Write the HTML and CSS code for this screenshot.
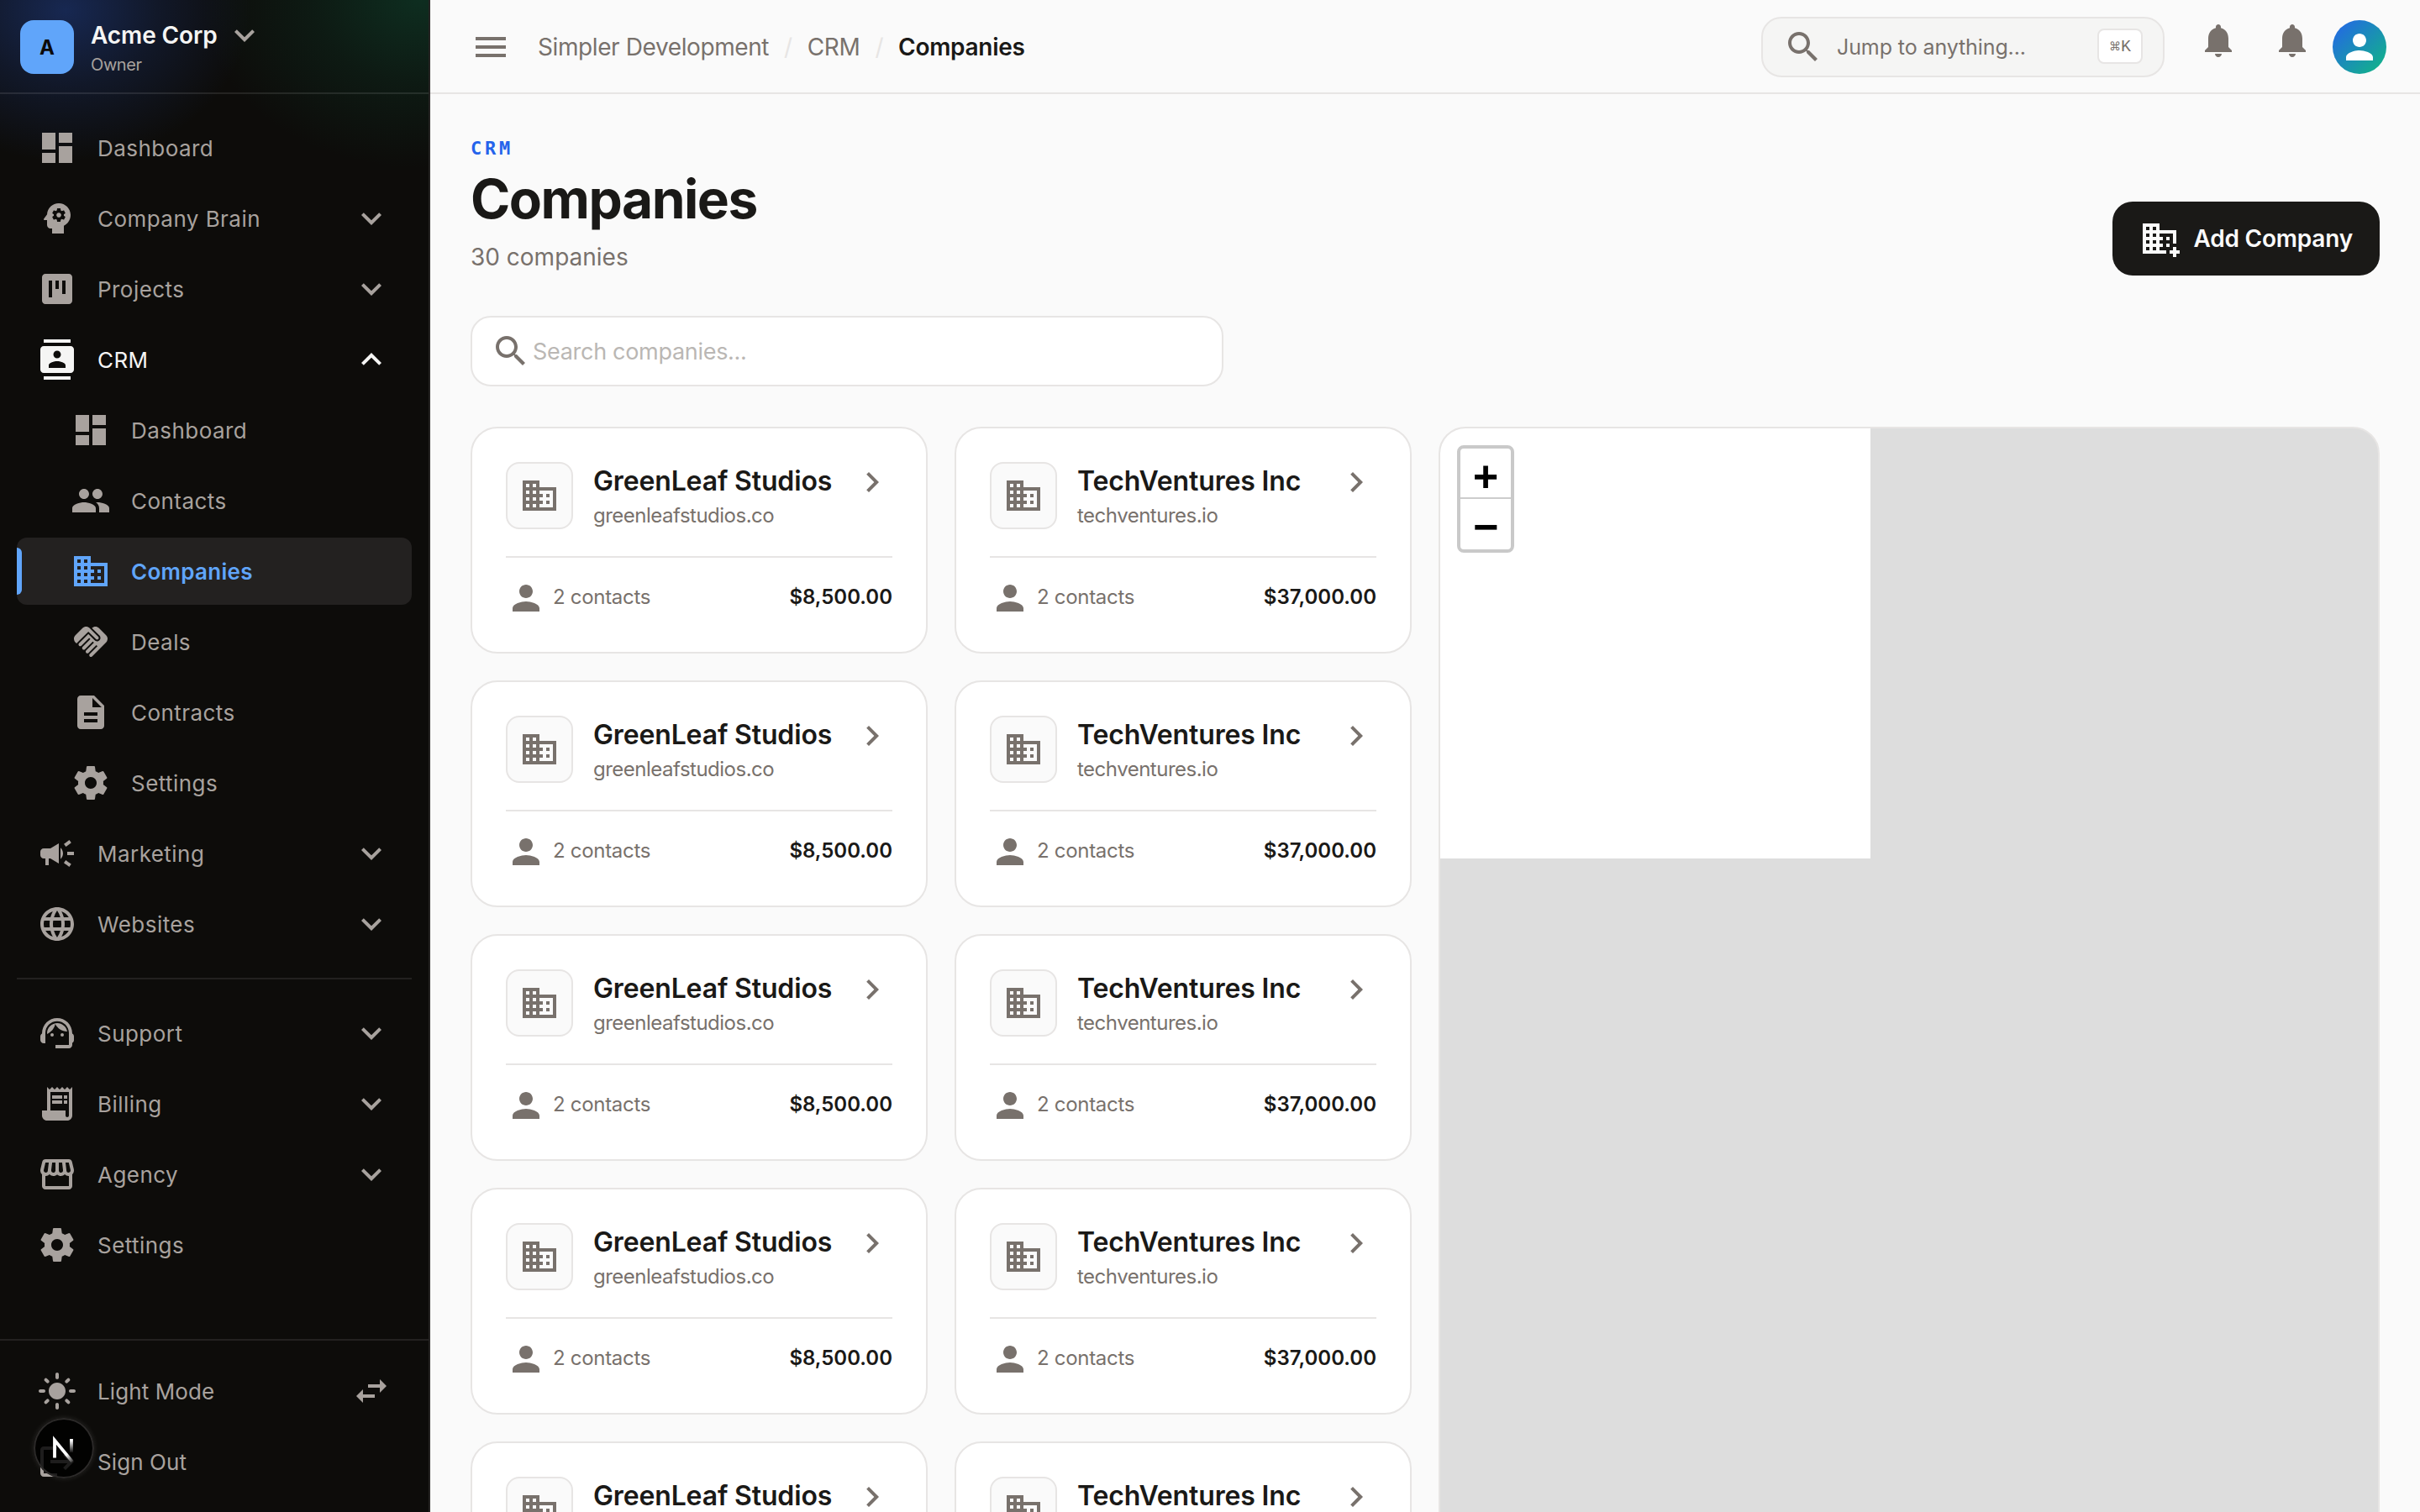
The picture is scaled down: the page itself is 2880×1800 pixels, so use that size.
FILE: index.html
```
<!DOCTYPE html>
<html lang="en">
<head>
    <meta charset="UTF-8">
    <meta name="viewport" content="width=device-width, initial-scale=1.0">
    <title>Companies - CRM</title>
    <link rel="stylesheet" href="styles.css">
</head>
<body>
    <!-- icon sprite -->
    <svg class="sprite" aria-hidden="true">
        <symbol id="i-dashboard" viewBox="0 0 24 24"><path d="M3 13h8V3H3v10zm0 8h8v-6H3v6zm10 0h8V11h-8v10zm0-18v6h8V3h-8z"/></symbol>
        <symbol id="i-brain" viewBox="0 0 24 24"><path d="M13 8.57c-.79 0-1.43.64-1.43 1.43s.64 1.43 1.43 1.43 1.43-.64 1.43-1.43-.64-1.43-1.43-1.43z"/><path d="M13 3C9.25 3 6.2 5.94 6.02 9.64L4.1 12.2c-.25.33-.01.8.4.8H6v3c0 1.1.9 2 2 2h1v3h7v-4.68c2.36-1.12 4-3.53 4-6.32 0-3.87-3.13-7-7-7zm3 7c0 .13-.01.26-.02.39l.83.66c.08.06.1.16.05.25l-.8 1.39c-.05.09-.16.12-.24.09l-.99-.4c-.21.16-.43.29-.67.39L14 13.83c-.01.1-.1.17-.2.17h-1.6c-.1 0-.18-.07-.2-.17l-.15-1.06c-.25-.1-.47-.23-.68-.39l-.99.4c-.09.03-.2 0-.25-.09l-.8-1.39c-.05-.08-.03-.19.05-.25l.84-.66c-.01-.13-.02-.26-.02-.39s.02-.27.04-.39l-.85-.66c-.08-.06-.1-.16-.05-.26l.8-1.38c.05-.09.15-.12.24-.09l1 .4c.2-.15.43-.29.67-.39l.15-1.06c.02-.1.1-.17.2-.17h1.6c.1 0 .18.07.2.17l.15 1.06c.24.1.46.23.67.39l1-.4c.09-.03.2 0 .24.09l.8 1.38c.05.09.03.2-.05.26l-.85.66c.03.12.04.25.04.39z"/></symbol>
        <symbol id="i-kanban" viewBox="0 0 24 24"><path d="M19 3H5c-1.1 0-2 .9-2 2v14c0 1.1.9 2 2 2h14c1.1 0 2-.9 2-2V5c0-1.1-.9-2-2-2zM9 17H7V7h2v10zm4-5h-2V7h2v5zm4 3h-2V7h2v8z"/></symbol>
        <symbol id="i-contacts" viewBox="0 0 24 24"><path d="M20 0H4v2h16V0zM4 24h16v-2H4v2zM20 4H4c-1.1 0-2 .9-2 2v12c0 1.1.9 2 2 2h16c1.1 0 2-.9 2-2V6c0-1.1-.9-2-2-2zm-8 2.75c1.24 0 2.25 1.01 2.25 2.25s-1.01 2.25-2.25 2.25S9.75 10.24 9.75 9 10.76 6.75 12 6.75zM17 17H7v-1.5c0-1.67 3.33-2.5 5-2.5s5 .83 5 2.5V17z"/></symbol>
        <symbol id="i-people" viewBox="0 0 24 24"><path d="M16 11c1.66 0 2.99-1.34 2.99-3S17.66 5 16 5c-1.66 0-3 1.34-3 3s1.34 3 3 3zm-8 0c1.66 0 2.99-1.34 2.99-3S9.66 5 8 5C6.34 5 5 6.34 5 8s1.34 3 3 3zm0 2c-2.33 0-7 1.17-7 3.5V19h14v-2.5c0-2.33-4.67-3.5-7-3.5zm8 0c-.29 0-.62.02-.97.05 1.16.84 1.97 1.97 1.97 3.45V19h6v-2.5c0-2.33-4.67-3.5-7-3.5z"/></symbol>
        <symbol id="i-domain" viewBox="0 0 24 24"><path d="M12 7V3H2v18h20V7H12zM6 19H4v-2h2v2zm0-4H4v-2h2v2zm0-4H4V9h2v2zm0-4H4V5h2v2zm4 12H8v-2h2v2zm0-4H8v-2h2v2zm0-4H8V9h2v2zm0-4H8V5h2v2zm10 12h-8v-2h2v-2h-2v-2h2v-2h-2V9h8v10zm-2-8h-2v2h2v-2zm0 4h-2v2h2v-2z"/></symbol>
        <symbol id="i-domain-add" viewBox="0 0 24 24"><path d="M12 7V3H2v18h14v-2h-4v-2h2v-2h-2v-2h2v-2h-2V9h8v6h2V7H12zM6 19H4v-2h2v2zm0-4H4v-2h2v2zm0-4H4V9h2v2zm0-4H4V5h2v2zm4 12H8v-2h2v2zm0-4H8v-2h2v2zm0-4H8V9h2v2zm0-4H8V5h2v2zm8 4h-2v2h2v-2zm0 4h-2v2h2v-2z"/><path d="M20 17h2v2h2v2h-2v2h-2v-2h-2v-2h2z"/></symbol>
        <symbol id="i-handshake" viewBox="0 0 24 24"><path d="M16.48 10.41c-.39.39-1.04.39-1.43 0l-4.47-4.46-7.05 7.04-.66-.63c-1.17-1.17-1.17-3.07 0-4.24l4.24-4.24c1.17-1.17 3.07-1.17 4.24 0L16.48 9c.39.39.39 1.02 0 1.41zm.7-2.12c.78.78.78 2.05 0 2.83-1.27 1.27-2.61.22-2.83 0l-3.76-3.76-5.57 5.57c-.39.39-.39 1.02 0 1.41.39.39 1.02.39 1.42 0l4.62-4.62.71.71-4.62 4.62c-.39.39-.39 1.02 0 1.41.39.39 1.02.39 1.42 0l4.62-4.62.71.71-4.62 4.62c-.39.39-.39 1.02 0 1.41.39.39 1.02.39 1.41 0l4.62-4.62.71.71-4.62 4.62c-.39.39-.39 1.02 0 1.41.39.39 1.02.39 1.41 0l8.32-8.34c1.17-1.17 1.17-3.07 0-4.24l-4.24-4.24c-1.15-1.15-3.01-1.17-4.18-.06l4.47 4.47z"/></symbol>
        <symbol id="i-description" viewBox="0 0 24 24"><path d="M14 2H6c-1.1 0-1.99.9-1.99 2L4 20c0 1.1.89 2 1.99 2H18c1.1 0 2-.9 2-2V8l-6-6zm2 16H8v-2h8v2zm0-4H8v-2h8v2zm-3-5V3.5L18.5 9H13z"/></symbol>
        <symbol id="i-settings" viewBox="0 0 24 24"><path d="M19.43 12.98c.04-.32.07-.64.07-.98s-.03-.66-.07-.98l2.11-1.65c.19-.15.24-.42.12-.64l-2-3.46c-.12-.22-.39-.3-.61-.22l-2.49 1c-.52-.4-1.08-.73-1.69-.98l-.38-2.65C14.46 2.18 14.25 2 14 2h-4c-.25 0-.46.18-.49.42l-.38 2.65c-.61.25-1.17.59-1.69.98l-2.49-1c-.23-.09-.49 0-.61.22l-2 3.46c-.13.22-.07.49.12.64l2.11 1.65c-.04.32-.07.65-.07.98s.03.66.07.98l-2.11 1.65c-.19.15-.24.42-.12.64l2 3.46c.12.22.39.3.61.22l2.49-1c.52.4 1.08.73 1.69.98l.38 2.65c.03.24.24.42.49.42h4c.25 0 .46-.18.49-.42l.38-2.65c.61-.25 1.17-.59 1.69-.98l2.49 1c.23.09.49 0 .61-.22l2-3.46c.12-.22.07-.49-.12-.64l-2.11-1.65zM12 15.5c-1.93 0-3.5-1.57-3.5-3.5s1.57-3.5 3.5-3.5 3.5 1.57 3.5 3.5-1.57 3.5-3.5 3.5z"/></symbol>
        <symbol id="i-campaign" viewBox="0 0 24 24"><path d="M18 11v2h4v-2h-4zm-2 6.61c.96.71 2.21 1.65 3.2 2.39.4-.53.8-1.07 1.2-1.6-.99-.74-2.24-1.68-3.2-2.4-.4.54-.8 1.08-1.2 1.61zM20.4 5.6c-.4-.53-.8-1.07-1.2-1.6-.99.74-2.24 1.68-3.2 2.4.4.53.8 1.07 1.2 1.6.96-.72 2.21-1.65 3.2-2.4zM4 9c-1.1 0-2 .9-2 2v2c0 1.1.9 2 2 2h1v4h2v-4h1l5 3V6L8 9H4zm11.5 3c0-1.33-.58-2.53-1.5-3.35v6.69c.92-.81 1.5-2.01 1.5-3.34z"/></symbol>
        <symbol id="i-language" viewBox="0 0 24 24"><path d="M11.99 2C6.47 2 2 6.48 2 12s4.47 10 9.99 10C17.52 22 22 17.52 22 12S17.52 2 11.99 2zm6.93 6h-2.95c-.32-1.25-.78-2.45-1.38-3.56 1.84.63 3.37 1.91 4.33 3.56zM12 4.04c.83 1.2 1.48 2.53 1.91 3.96h-3.82c.43-1.43 1.08-2.76 1.91-3.96zM4.26 14C4.1 13.36 4 12.69 4 12s.1-1.36.26-2h3.38c-.08.66-.14 1.32-.14 2 0 .68.06 1.34.14 2H4.26zm.82 2h2.95c.32 1.25.78 2.45 1.38 3.56-1.84-.63-3.37-1.9-4.33-3.56zm2.95-8H5.08c.96-1.66 2.49-2.93 4.33-3.56C8.81 5.55 8.35 6.75 8.03 8zM12 19.96c-.83-1.2-1.48-2.53-1.91-3.96h3.82c-.43 1.43-1.08 2.76-1.91 3.96zM14.34 14H9.66c-.09-.66-.16-1.32-.16-2 0-.68.07-1.35.16-2h4.68c.09.65.16 1.32.16 2 0 .68-.07 1.34-.16 2zm.25 5.56c.6-1.11 1.06-2.31 1.38-3.56h2.95c-.96 1.65-2.49 2.93-4.33 3.56zM16.36 14c.08-.66.14-1.32.14-2 0-.68-.06-1.34-.14-2h3.38c.16.64.26 1.31.26 2s-.1 1.36-.26 2h-3.38z"/></symbol>
        <symbol id="i-support" viewBox="0 0 24 24"><path d="M21 12.22C21 6.73 16.74 3 12 3c-4.69 0-9 3.65-9 9.28-.6.34-1 .98-1 1.72v2c0 1.1.9 2 2 2h1v-6.1c0-3.87 3.13-7 7-7s7 3.13 7 7V19h-8v2h8c1.1 0 2-.9 2-2v-1.22c.59-.31 1-.92 1-1.64v-2.3c0-.7-.41-1.31-1-1.62z"/><circle cx="9" cy="13" r="1"/><circle cx="15" cy="13" r="1"/><path d="M18 11.03C17.52 8.18 15.04 6 12.05 6c-3.03 0-6.29 2.51-6.03 6.45 2.47-1.01 4.33-3.21 4.86-5.89 1.31 2.63 4 4.44 7.12 4.47z"/></symbol>
        <symbol id="i-receipt" viewBox="0 0 24 24"><path d="M19.5 3.5L18 2l-1.5 1.5L15 2l-1.5 1.5L12 2l-1.5 1.5L9 2 7.5 3.5 6 2v14H3v3c0 1.66 1.34 3 3 3h12c1.66 0 3-1.34 3-3V2l-1.5 1.5zM19 19c0 .55-.45 1-1 1s-1-.45-1-1v-3H8V5h11v14z"/><path d="M9 7h6v2H9zM16 7h2v2h-2zM9 10h6v2H9zM16 10h2v2h-2z"/></symbol>
        <symbol id="i-storefront" viewBox="0 0 24 24"><path d="M21.9 8.89l-1.05-4.37c-.22-.9-1-1.52-1.91-1.52H5.05c-.9 0-1.69.63-1.9 1.52L2.1 8.89c-.24 1.02-.02 2.06.62 2.88.08.11.19.19.28.29V19c0 1.1.9 2 2 2h14c1.1 0 2-.9 2-2v-6.94c.09-.09.2-.18.28-.28.64-.82.87-1.87.62-2.89zm-2.99-3.9l1.05 4.37c.1.42.01.84-.25 1.17-.14.18-.44.47-.94.47-.61 0-1.14-.49-1.21-1.14L16.98 5l1.93-.01zM13 5h1.96l.54 4.52c.05.39-.07.78-.33 1.07-.22.26-.54.41-.95.41-.67 0-1.22-.59-1.22-1.31V5zM8.49 9.52L9.04 5H11v4.69c0 .72-.55 1.31-1.29 1.31-.34 0-.65-.15-.89-.41-.25-.29-.37-.68-.33-1.07zm-4.45-.16L5.05 5h1.97l-.58 4.86c-.08.65-.6 1.14-1.21 1.14-.49 0-.8-.29-.93-.47-.27-.32-.36-.75-.26-1.17zM5 19v-6.03c.08.01.15.03.23.03.87 0 1.66-.36 2.24-.95.6.6 1.4.95 2.31.95.87 0 1.65-.36 2.23-.93.59.57 1.39.93 2.29.93.84 0 1.64-.35 2.24-.95.58.59 1.37.95 2.24.95.08 0 .15-.02.23-.03V19H5z"/></symbol>
        <symbol id="i-light" viewBox="0 0 24 24"><path d="M12 7c-2.76 0-5 2.24-5 5s2.24 5 5 5 5-2.24 5-5-2.24-5-5-5zM2 13h2c.55 0 1-.45 1-1s-.45-1-1-1H2c-.55 0-1 .45-1 1s.45 1 1 1zm18 0h2c.55 0 1-.45 1-1s-.45-1-1-1h-2c-.55 0-1 .45-1 1s.45 1 1 1zM11 2v2c0 .55.45 1 1 1s1-.45 1-1V2c0-.55-.45-1-1-1s-1 .45-1 1zm0 18v2c0 .55.45 1 1 1s1-.45 1-1v-2c0-.55-.45-1-1-1s-1 .45-1 1zM5.99 4.58c-.39-.39-1.03-.39-1.41 0-.39.39-.39 1.03 0 1.41l1.06 1.06c.39.39 1.03.39 1.41 0s.39-1.03 0-1.41L5.99 4.58zm12.37 12.37c-.39-.39-1.03-.39-1.41 0-.39.39-.39 1.03 0 1.41l1.06 1.06c.39.39 1.03.39 1.41 0 .39-.39.39-1.03 0-1.41l-1.06-1.06zm1.06-10.96c.39-.39.39-1.03 0-1.41-.39-.39-1.03-.39-1.41 0l-1.06 1.06c-.39.39-.39 1.03 0 1.41s1.03.39 1.41 0l1.06-1.06zM7.05 18.36c.39-.39.39-1.03 0-1.41-.39-.39-1.03-.39-1.41 0l-1.06 1.06c-.39.39-.39 1.03 0 1.41s1.03.39 1.41 0l1.06-1.06z"/></symbol>
        <symbol id="i-swap" viewBox="0 0 24 24"><path d="M6.99 11L3 15l3.99 4v-3H14v-2H6.99v-3zM21 9l-3.99-4v3H10v2h7.01v3L21 9z"/></symbol>
        <symbol id="i-logout" viewBox="0 0 24 24"><path d="M17 7l-1.41 1.41L18.17 11H8v2h10.17l-2.58 2.58L17 17l5-5zM4 5h8V3H4c-1.1 0-2 .9-2 2v14c0 1.1.9 2 2 2h8v-2H4V5z"/></symbol>
        <symbol id="i-more" viewBox="0 0 24 24"><path d="M16.59 8.59L12 13.17 7.41 8.59 6 10l6 6 6-6z"/></symbol>
        <symbol id="i-less" viewBox="0 0 24 24"><path d="M12 8l-6 6 1.41 1.41L12 10.83l4.59 4.58L18 14z"/></symbol>
        <symbol id="i-right" viewBox="0 0 24 24"><path d="M10 6L8.59 7.41 13.17 12l-4.58 4.59L10 18l6-6z"/></symbol>
        <symbol id="i-menu" viewBox="0 0 24 24"><path d="M3 18h18v-2H3v2zm0-5h18v-2H3v2zm0-7v2h18V6H3z"/></symbol>
        <symbol id="i-search" viewBox="0 0 24 24"><path d="M15.5 14h-.79l-.28-.27C15.41 12.59 16 11.11 16 9.5 16 5.91 13.09 3 9.5 3S3 5.91 3 9.5 5.91 16 9.5 16c1.61 0 3.09-.59 4.23-1.57l.27.28v.79l5 4.99L20.49 19l-4.99-5zm-6 0C7.01 14 5 11.99 5 9.5S7.01 5 9.5 5 14 7.01 14 9.5 11.99 14 9.5 14z"/></symbol>
        <symbol id="i-bell" viewBox="0 0 24 24"><path d="M12 22c1.1 0 2-.9 2-2h-4c0 1.1.89 2 2 2zm6-6v-5c0-3.07-1.64-5.64-4.5-6.32V4c0-.83-.67-1.5-1.5-1.5s-1.5.67-1.5 1.5v.68C7.63 5.36 6 7.92 6 11v5l-2 2v1h16v-1l-2-2z"/></symbol>
        <symbol id="i-person" viewBox="0 0 24 24"><path d="M12 12c2.21 0 4-1.79 4-4s-1.79-4-4-4-4 1.79-4 4 1.79 4 4 4zm0 2c-2.67 0-8 1.34-8 4v2h16v-2c0-2.66-5.33-4-8-4z"/></symbol>
    </svg>

    <aside class="sidebar">
        <div class="workspace">
            <div class="workspace-logo">A</div>
            <div class="workspace-info">
                <div class="workspace-name">Acme Corp <svg class="icon"><use href="#i-more"/></svg></div>
                <div class="workspace-role">Owner</div>
            </div>
        </div>
        <nav class="nav">
            <a class="nav-item"><svg class="icon"><use href="#i-dashboard"/></svg><span>Dashboard</span></a>
            <a class="nav-item"><svg class="icon"><use href="#i-brain"/></svg><span>Company Brain</span><svg class="icon"><use href="#i-more"/></svg></a>
            <a class="nav-item"><svg class="icon"><use href="#i-kanban"/></svg><span>Projects</span><svg class="icon"><use href="#i-more"/></svg></a>
            <a class="nav-item open"><svg class="icon"><use href="#i-contacts"/></svg><span>CRM</span><svg class="icon"><use href="#i-less"/></svg></a>
            <a class="nav-item sub"><svg class="icon"><use href="#i-dashboard"/></svg><span>Dashboard</span></a>
            <a class="nav-item sub"><svg class="icon"><use href="#i-people"/></svg><span>Contacts</span></a>
            <a class="nav-item sub active"><svg class="icon"><use href="#i-domain"/></svg><span>Companies</span></a>
            <a class="nav-item sub"><svg class="icon"><use href="#i-handshake"/></svg><span>Deals</span></a>
            <a class="nav-item sub"><svg class="icon"><use href="#i-description"/></svg><span>Contracts</span></a>
            <a class="nav-item sub"><svg class="icon"><use href="#i-settings"/></svg><span>Settings</span></a>
            <a class="nav-item"><svg class="icon"><use href="#i-campaign"/></svg><span>Marketing</span><svg class="icon"><use href="#i-more"/></svg></a>
            <a class="nav-item"><svg class="icon"><use href="#i-language"/></svg><span>Websites</span><svg class="icon"><use href="#i-more"/></svg></a>
            <hr class="nav-divider">
            <a class="nav-item"><svg class="icon"><use href="#i-support"/></svg><span>Support</span><svg class="icon"><use href="#i-more"/></svg></a>
            <a class="nav-item"><svg class="icon"><use href="#i-receipt"/></svg><span>Billing</span><svg class="icon"><use href="#i-more"/></svg></a>
            <a class="nav-item"><svg class="icon"><use href="#i-storefront"/></svg><span>Agency</span><svg class="icon"><use href="#i-more"/></svg></a>
            <a class="nav-item"><svg class="icon"><use href="#i-settings"/></svg><span>Settings</span></a>
        </nav>
        <div class="sidebar-footer">
            <a class="nav-item"><svg class="icon"><use href="#i-light"/></svg><span>Light Mode</span><svg class="icon"><use href="#i-swap"/></svg></a>
            <a class="nav-item"><svg class="icon"><use href="#i-logout"/></svg><span>Sign Out</span></a>
        </div>
    </aside>

    <div class="page">
        <header class="topbar">
            <svg class="icon"><use href="#i-menu"/></svg>
            <div class="breadcrumb">
                <span>Simpler Development</span><i>/</i><span>CRM</span><i>/</i><b>Companies</b>
            </div>
            <div class="jump">
                <svg class="icon"><use href="#i-search"/></svg>
                <span>Jump to anything...</span>
                <kbd><small>⌘</small>K</kbd>
            </div>
            <svg class="icon bell"><use href="#i-bell"/></svg>
            <svg class="icon bell"><use href="#i-bell"/></svg>
            <div class="avatar"><svg class="icon"><use href="#i-person"/></svg></div>
        </header>

        <main class="content">
            <div class="page-head">
                <div>
                    <div class="eyebrow">CRM</div>
                    <h1>Companies</h1>
                    <p class="subtitle">30 companies</p>
                </div>
                <button class="add-button"><svg class="icon"><use href="#i-domain-add"/></svg>Add Company</button>
            </div>
            <div class="search">
                <svg class="icon"><use href="#i-search"/></svg>
                <span>Search companies...</span>
            </div>
            <div class="split">
                <div class="cards" id="cards"></div>
                <div class="map">
                    <div class="map-tile"></div>
                    <div class="map-zoom">
                        <a>+</a>
                        <a>−</a>
                    </div>
                </div>
            </div>
        </main>
    </div>

    <div class="dev-badge">
        <svg viewBox="0 0 72 72" fill="none" stroke-width="3.8">
            <defs>
                <linearGradient id="fadeA" gradientUnits="userSpaceOnUse" x1="40" y1="43" x2="48" y2="53">
                    <stop stop-color="#fff"/><stop offset="1" stop-color="#fff" stop-opacity="0"/>
                </linearGradient>
                <linearGradient id="fadeB" gradientUnits="userSpaceOnUse" x1="45" y1="27" x2="45" y2="42">
                    <stop stop-color="#fff"/><stop offset="1" stop-color="#fff" stop-opacity="0"/>
                </linearGradient>
            </defs>
            <path d="M25 47.5V26.5L46 52" stroke="url(#fadeA)"/>
            <path d="M45 25V41" stroke="url(#fadeB)"/>
        </svg>
    </div>

    <script>
        const companies = [
            { name: 'GreenLeaf Studios', domain: 'greenleafstudios.co', contacts: 2, value: '$8,500.00' },
            { name: 'TechVentures Inc', domain: 'techventures.io', contacts: 2, value: '$37,000.00' }
        ];
        const cards = document.getElementById('cards');
        for (let i = 0; i < 10; i++) {
            const c = companies[i % 2];
            const card = document.createElement('div');
            card.className = 'card';
            card.innerHTML = `
                <div class="card-head">
                    <div class="card-tile"><svg class="icon"><use href="#i-domain"/></svg></div>
                    <div class="card-title">
                        <h3>${c.name}</h3>
                        <p>${c.domain}</p>
                    </div>
                    <svg class="icon"><use href="#i-right"/></svg>
                </div>
                <div class="card-foot">
                    <svg class="icon"><use href="#i-person"/></svg>
                    <span>${c.contacts} contacts</span>
                    <b>${c.value}</b>
                </div>`;
            cards.appendChild(card);
        }
    </script>
</body>
</html>
```
FILE: styles.css
```
* { box-sizing: border-box; }
body {
    margin: 0;
    width: 2880px;
    height: 1800px;
    display: flex;
    overflow: hidden;
    background: #fafafa;
    color: #1a1917;
    font-family: Inter, "Liberation Sans", sans-serif;
}
h1, h3, p { margin: 0; }
.sprite { display: none; }
.icon { width: 48px; height: 48px; flex: none; fill: currentColor; display: block; }

/* sidebar */
.sidebar {
    width: 512px;
    height: 1800px;
    flex: none;
    display: flex;
    flex-direction: column;
    color: #a8a29e;
    border-right: 2px solid #262423;
    background:
        radial-gradient(ellipse 220px 180px at 78px 12px, rgba(37, 78, 180, 0.42), rgba(37, 78, 180, 0.18) 50%, transparent),
        radial-gradient(ellipse 260px 200px at 500px 0, rgba(16, 110, 74, 0.34), rgba(16, 110, 74, 0.14) 50%, transparent),
        #0d0c0a;
}
.workspace {
    height: 112px;
    padding: 2px 24px 0;
    display: flex;
    align-items: center;
    gap: 20px;
    border-bottom: 2px solid rgba(255, 255, 255, 0.1);
}
.workspace-logo {
    width: 64px;
    height: 64px;
    border-radius: 16px;
    background: #60a5fa;
    color: #0c0a09;
    font-size: 24px;
    font-weight: 700;
    display: flex;
    align-items: center;
    justify-content: center;
}
.workspace-name { height: 42px; display: flex; align-items: center; gap: 8px; font-size: 28px; font-weight: 600; letter-spacing: -0.1px; color: #f5f5f4; }
.workspace-name .icon { color: #a8a29e; }
.workspace-role { font-size: 20px; line-height: 28px; letter-spacing: -0.4px; }
.nav { flex: 1; padding: 24px 20px; display: flex; flex-direction: column; gap: 4px; }
.nav-item {
    position: relative;
    height: 80px;
    flex: none;
    padding: 0 24px;
    display: flex;
    align-items: center;
    gap: 24px;
    border-radius: 12px;
    font-size: 26px;
    letter-spacing: 0.45px;
}
.nav-item span { flex: 1; }
.nav-item.open { color: #f5f5f4; }
.nav-item.sub { padding-left: 64px; }
.nav-item.active { background: #232120; color: #60a5fa; font-weight: 600; letter-spacing: 0.3px; }
.nav-item.active::before {
    content: "";
    position: absolute;
    left: 0;
    top: 12px;
    width: 6px;
    height: 56px;
    border-radius: 0 6px 6px 0;
    background: #60a5fa;
}
.nav-divider { width: 100%; height: 2px; margin: 20px 0; border: 0; background: #232120; }
.sidebar-footer { padding: 20px; border-top: 2px solid #232120; display: flex; flex-direction: column; gap: 4px; }
.sidebar-footer .nav-item { letter-spacing: 0.1px; }

/* top bar */
.page { flex: 1; min-width: 0; height: 1800px; overflow: hidden; display: flex; flex-direction: column; }
.topbar {
    height: 112px;
    flex: none;
    padding: 2px 40px 0 48px;
    display: flex;
    align-items: center;
    border-bottom: 2px solid #e7e5e4;
    color: #78716c;
}
.breadcrumb { flex: 1; margin-left: 32px; display: flex; align-items: center; font-size: 28px; letter-spacing: -0.4px; }
.breadcrumb i { margin: 0 18px; font-style: normal; color: #e7e5e4; }
.breadcrumb b { font-weight: 600; color: #1a1917; letter-spacing: -0.3px; }
.jump {
    width: 480px;
    height: 72px;
    padding: 0 24px;
    display: flex;
    align-items: center;
    gap: 16px;
    border: 2px solid #e7e5e4;
    border-radius: 24px;
    background: #f5f5f4;
    font-size: 25px;
    letter-spacing: -0.1px;
}
.jump span { flex: 1; }
.jump kbd {
    width: 54px;
    height: 42px;
    margin-top: -2px;
    display: flex;
    align-items: center;
    justify-content: center;
    border: 2px solid #e7e5e4;
    border-radius: 8px;
    background: #fff;
    font: 20px "Liberation Mono", monospace;
    letter-spacing: 0;
}
.jump small { font: 14px "DejaVu Sans", sans-serif; }
.bell { margin: -16px 0 0 40px; }
.avatar {
    width: 64px;
    height: 64px;
    margin-left: 24px;
    border-radius: 50%;
    display: flex;
    align-items: center;
    justify-content: center;
    color: #fff;
    background: linear-gradient(135deg, #2563eb, #10b981);
}

/* content */
.content { padding: 48px; }
.page-head { height: 168px; display: flex; justify-content: space-between; align-items: flex-end; }
.eyebrow { font: 700 22px/34px "DejaVu Sans Mono", monospace; letter-spacing: 3.8px; color: #2563eb; }
h1 { margin-top: 8px; font-size: 64px; line-height: 70px; font-weight: 700; letter-spacing: -1.5px; }
.subtitle { margin-top: 13px; font-size: 28px; line-height: 43px; color: #78716c; }
.add-button {
    height: 88px;
    padding: 0 32px;
    display: flex;
    align-items: center;
    gap: 16px;
    border: 0;
    border-radius: 24px;
    background: #1a1917;
    color: #fafafa;
    font: 600 28px Inter, sans-serif;
    letter-spacing: -0.2px;
}
.search {
    width: 896px;
    height: 84px;
    margin: 48px 0;
    padding: 0 22px;
    display: flex;
    align-items: center;
    gap: 2px;
    border: 2px solid #e7e5e4;
    border-radius: 24px;
    background: #fff;
    color: #78716c;
    font-size: 27px;
    letter-spacing: -0.3px;
}
.search span { color: #bab7b4; }
.split { display: grid; grid-template-columns: 1120px 1120px; gap: 32px; }
.cards { display: grid; grid-template-columns: 1fr 1fr; gap: 32px; }
.card { height: 270px; padding: 40px; border: 2px solid #e7e5e4; border-radius: 32px; background: #fff; color: #78716c; }
.card-head { display: flex; height: 114px; border-bottom: 2px solid #e7e5e4; }
.card-tile {
    width: 80px;
    height: 80px;
    margin-right: 24px;
    display: flex;
    align-items: center;
    justify-content: center;
    border: 2px solid #e7e5e4;
    border-radius: 16px;
    background: #fafafa;
}
.card-title { flex: 1; min-width: 0; white-space: nowrap; }
.card-title h3 { font-size: 32px; line-height: 46px; font-weight: 600; letter-spacing: -0.15px; color: #1a1917; }
.card-title p { font-size: 24px; line-height: 35px; letter-spacing: -0.5px; }
.card-foot { height: 48px; margin-top: 24px; display: flex; align-items: center; gap: 8px; font-size: 24px; line-height: 28px; letter-spacing: -0.3px; }
.card-foot span, .card-foot b { padding-bottom: 2px; }
.card-foot b { margin-left: auto; font-weight: 600; letter-spacing: 0; color: #1a1917; }

/* map */
.map { position: relative; border: 2px solid #e7e5e4; border-radius: 32px; overflow: hidden; background: #ddd; }
.map-tile { width: 512px; height: 512px; background: #fff; }
.map-zoom { position: absolute; left: 20px; top: 20px; border: 4px solid #c9c9c9; border-radius: 8px; background: #fff; }
.map-zoom a {
    width: 60px;
    height: 60px;
    display: block;
    text-align: center;
    font: 700 52px/75px "Liberation Mono", monospace;
    color: #000;
}
.map-zoom a:first-child { border-bottom: 2px solid #ccc; }

/* dev tools badge */
.dev-badge {
    position: fixed;
    left: 40px;
    top: 1688px;
    width: 72px;
    height: 72px;
    border-radius: 50%;
    background: rgba(0, 0, 0, 0.82);
    box-shadow: inset 0 0 0 2px #2c2a29, 0 0 6px rgba(255, 255, 255, 0.12);
}
.dev-badge svg { display: block; }
```
